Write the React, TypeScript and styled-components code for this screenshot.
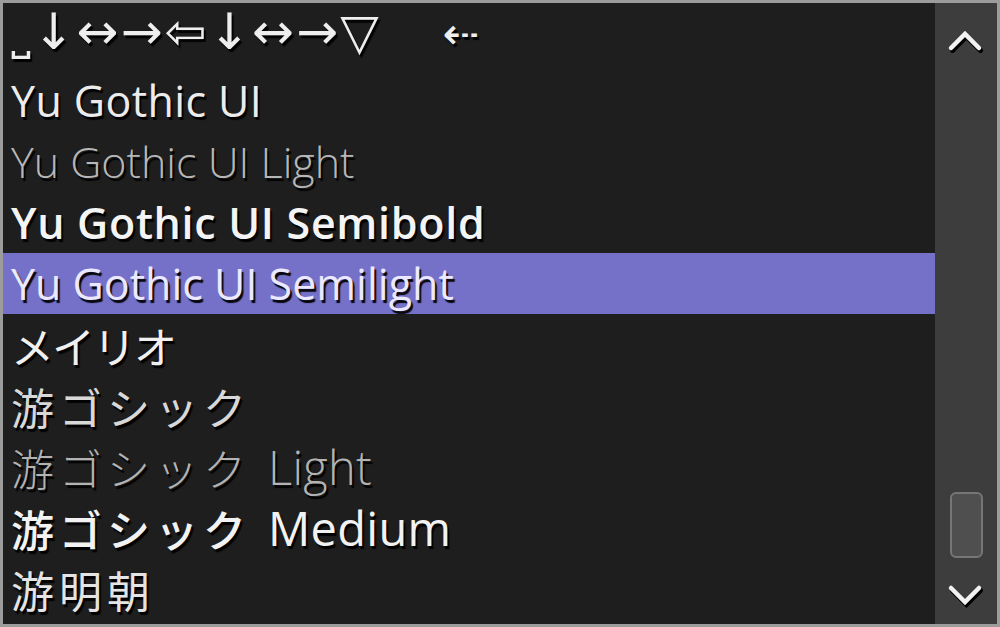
import React from "react";
import styled, { createGlobalStyle } from "styled-components";

const Global = createGlobalStyle`
  html, body { margin: 0; padding: 0; background: #1e1e1e; }
  #root { width: 1000px; height: 627px; }
`;

const Frame = styled.div`
  box-sizing: border-box;
  width: 1000px;
  height: 627px;
  border: 3px solid #9c9c9c;
  background: #1e1e1e;
  display: grid;
  grid-template-columns: 1fr 62px;
  overflow: hidden;
`;

const List = styled.div`
  display: flex;
  flex-direction: column;
  padding-top: 6px;
  overflow: hidden;
`;

const Row = styled.div<{ $selected?: boolean; $weight: number; $tone: string; $track?: number }>`
  height: 61px;
  flex: 0 0 61px;
  display: flex;
  align-items: center;
  padding-left: 8px;
  background: ${(p) => (p.$selected ? "#7571c9" : "transparent")};
  color: ${(p) => p.$tone};
  font-family: "Open Sans", "Noto Sans CJK JP", sans-serif;
  font-size: 43px;
  letter-spacing: ${(p) => p.$track ?? 0}px;
  font-weight: ${(p) => p.$weight};
  white-space: nowrap;
  text-shadow: 2px 3px 1px rgba(0, 0, 0, 0.95);
`;

const Kana = styled.span<{ $spacing: number; $after: number }>`
  font-family: "Noto Sans CJK JP", sans-serif;
  letter-spacing: ${(p) => p.$spacing}px;
  margin-right: ${(p) => p.$after}px;
`;

const Latin = styled.span`
  font-size: 47px;
  letter-spacing: 0.3px;
`;

const Symbols = styled.span`
  font-family: "DejaVu Sans", sans-serif;
  font-size: 50px;
  font-weight: 400;
  letter-spacing: 2px;
  position: relative;
  top: -8px;
`;

const Gap = styled.span`
  display: inline-block;
  width: 62px;
`;

const Small = styled.span`
  font-size: 44px;
`;

const Scrollbar = styled.div`
  background: #3d3d3d;
  display: flex;
  flex-direction: column;
  align-items: center;
  padding: 24px 0 14px;
`;

const Track = styled.div`
  flex: 1;
  width: 100%;
  display: flex;
  flex-direction: column;
  justify-content: flex-end;
  align-items: center;
  padding-bottom: 26px;
`;

const Thumb = styled.div`
  box-sizing: border-box;
  width: 33px;
  height: 66px;
  border: 2px solid #767676;
  border-radius: 6px;
  background: #4f4f4f;
`;

const Chevron = ({ up }: { up?: boolean }) => {
  const d = up ? "M4 21 L18 7 L32 21" : "M4 4 L18 18 L32 4";
  return (
    <svg width="38" height="26" viewBox="0 0 38 26">
      <g fill="none" strokeLinecap="round" strokeLinejoin="miter">
        <path d={d} stroke="#000" strokeWidth="5" transform="translate(1.5,2.5)" />
        <path d={d} stroke="#f2f2f2" strokeWidth="4.5" />
      </g>
    </svg>
  );
};

type F = {
  label?: string;
  kana?: string;
  rest?: string;
  spacing?: number;
  weight: number;
  tone: string;
  selected?: boolean;
  track?: number;
};

const fonts: F[] = [
  { label: "Yu Gothic UI", weight: 400, tone: "#ececec", track: 0.4 },
  { label: "Yu Gothic UI Light", weight: 300, tone: "#b7b7b7", track: 0 },
  { label: "Yu Gothic UI Semibold", weight: 600, tone: "#f4f4f4", track: 0.7 },
  { label: "Yu Gothic UI Semilight", weight: 400, tone: "#ebe8ff", selected: true, track: 0 },
  { kana: "メイリオ", spacing: -2, weight: 400, tone: "#f0f0f0" },
  { kana: "游ゴシック", spacing: 5, weight: 400, tone: "#d8d8d8" },
  { kana: "游ゴシック", rest: "Light", spacing: 5, weight: 300, tone: "#b3b3b3" },
  { kana: "游ゴシック", rest: "Medium", spacing: 5, weight: 500, tone: "#f2f2f2" },
  { kana: "游明朝", spacing: 5, weight: 400, tone: "#e4e4e4" },
];

export default function App() {
  return (
    <>
      <Global />
      <Frame>
        <List>
          <Row $weight={400} $tone="#eeeeee">
            <Symbols>
              ˽↓↔→⇦↓↔→▽<Gap />
              <Small>⇠</Small>
            </Symbols>
          </Row>
          {fonts.map((f, i) => (
            <Row key={i} $weight={f.weight} $tone={f.tone} $selected={f.selected} $track={f.track}>
              {f.kana ? (
                <Kana $spacing={f.spacing ?? 0} $after={f.rest ? 17 : 0}>
                  {f.kana}
                </Kana>
              ) : (
                f.label
              )}
              {f.rest && <Latin>{f.rest}</Latin>}
            </Row>
          ))}
        </List>
        <Scrollbar>
          <Chevron up />
          <Track>
            <Thumb />
          </Track>
          <Chevron />
        </Scrollbar>
      </Frame>
    </>
  );
}
